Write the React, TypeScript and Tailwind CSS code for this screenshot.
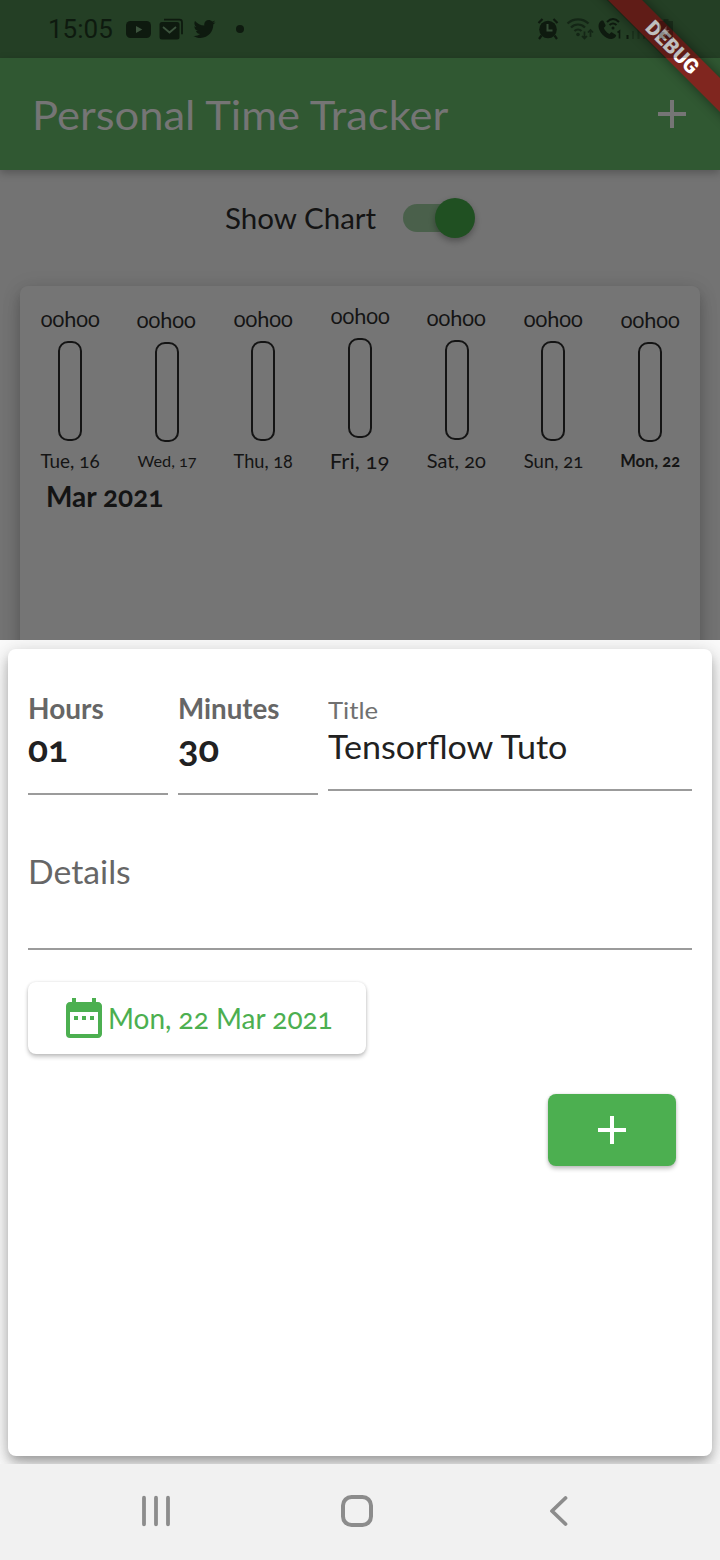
import type { ReactNode } from "react";
import { FaTwitter } from "react-icons/fa";
import { MdAdd, MdDateRange } from "react-icons/md";

type Day = { label: string; lift: string; style: string };

const days: Day[] = [
  { label: "Tue, 16", lift: "pb-[8px]", style: "text-[18.5px] scale-x-102" },
  { label: "Wed, 17", lift: "pb-[7px]", style: "text-[16px] scale-x-102" },
  { label: "Thu, 18", lift: "pb-[8px]", style: "text-[18.5px] scale-x-98" },
  { label: "Fri, 19", lift: "pb-[11px]", style: "text-[22px] scale-x-101" },
  { label: "Sat, 20", lift: "pb-[9px]", style: "text-[18.5px] scale-x-108" },
  { label: "Sun, 21", lift: "pb-[8px]", style: "text-[18.5px]" },
  { label: "Mon, 22", lift: "pb-[7px]", style: "text-[16.5px] font-bold" },
];

function StatusBar() {
  return (
    <div className="flex h-[58px] shrink-0 items-center bg-[#243f25] pl-[48px] text-[#0e1a0f]">
      <span className="w-[78px] font-['Roboto'] text-[26px] leading-[60px] [font-feature-settings:'lnum']">15:05</span>
      <svg className="h-[17px] w-[25px]" viewBox="0 0 25 17">
        <rect width="25" height="17" rx="4.5" fill="currentColor" />
        <path d="M10 5v7l6.3-3.500z" fill="#3c533d" />
      </svg>
      <svg className="ml-[8px] h-[22px] w-[25px]" viewBox="0 0 25 22" fill="none">
        <path d="M5 1.700h15.500a2.500 2.500 0 0 1 2.500 2.500v12" stroke="currentColor" strokeWidth="1.800" />
        <rect x="0.500" y="4" width="20" height="17.500" rx="2.500" fill="currentColor" />
        <path d="M4 9l6.500 5.500L17 9" stroke="#3c533d" strokeWidth="1.800" />
      </svg>
      <FaTwitter className="ml-[9px] h-[22px] w-[23px]" />
      <span className="ml-[20px] h-[8px] w-[8px] rounded-full bg-[#0e1a0f]" />
      <svg className="ml-[292px] h-[24px] w-[140px]" viewBox="0 0 140 24" fill="none" stroke="currentColor">
        <circle cx="12" cy="12.500" r="8.800" fill="currentColor" stroke="none" />
        <path d="M2.500 6l4-4M21.500 6l-4-4M5.500 18.500l-2.500 3.500M18.500 18.500l2.500 3.500" strokeWidth="2.200" />
        <path d="M11.500 7v6.500h5" stroke="#354d36" strokeWidth="2" />
        <g stroke="#142616" strokeWidth="2.200">
          <path d="M31.500 6.500c6-5.500 15-5.500 21 0M35 10.500c4-4 10-4 14 0M38.500 14c2-2 5-2 7 0" />
          <circle cx="42" cy="17.500" r="1.800" fill="#142616" stroke="none" />
          <path d="M48.500 14.500v7m-2.500-2.500l2.500 2.500 2.500-2.500M54.500 20v-7m-2.500 2.500l2.500-2.500 2.500 2.500" strokeWidth="1.700" />
        </g>
        <path
          d="M63.500 5.500c1.500-2 3-2.500 4-1.500l2 4c.3 1-.5 2-1.800 2.800 1.200 3 3.300 5 5.800 6.200 1.400-1.800 2-2 3-1.300l3.500 2.300c.8 1-2 4-4.500 4-7 0-13-7.500-13-13 0-1.300.3-2.500 1-3.500z"
          fill="currentColor"
          stroke="none"
        />
        <path d="M71 5c4-4 8-4 12 0M73.500 8c2.500-2.200 4.500-2.200 7 0" strokeWidth="2" />
        <circle cx="77" cy="11" r="1.500" fill="currentColor" stroke="none" />
        <path d="M81.500 15.500l2-1.500v7.500" strokeWidth="1.600" />
        <path d="M91.500 22v-4" strokeWidth="2" />
        <path d="M97 22v-8M102.500 22V9M108 22V4" stroke="#1c331d" strokeWidth="2" />
      </svg>
    </div>
  );
}

function DebugBanner() {
  return (
    <div className="pointer-events-none absolute top-0 right-0 h-[170px] w-[180px] overflow-hidden">
      <div className="absolute top-[35px] left-[8px] flex h-[24px] w-[248px] rotate-45 items-center justify-center bg-[#80261f] shadow-[0_0_12px_rgba(0,0,0,0.45)]">
        <span className="pl-px font-['Roboto'] text-[20.500px] leading-[24px] font-black text-white">DEBUG</span>
      </div>
      <div className="absolute top-0 left-0 h-[58px] w-[180px] bg-black/25 [clip-path:polygon(67px_0,102px_0,160px_58px,125px_58px)]" />
      <svg className="absolute top-[19px] left-[119px] h-[20px] w-[14px]" viewBox="0 0 14 20">
        <path d="M4.500 0h5v2H14v18H0V2h4.500z" fill="#000" fillOpacity="0.28" />
        <path d="M7.500 7l-5 6h3v5l5-7h-3z" fill="#fff" fillOpacity="0.25" />
      </svg>
    </div>
  );
}

function Field({ children, className }: { children: ReactNode; className: string }) {
  return <div className={`flex flex-col items-start border-b-2 border-[#9b9b9b] whitespace-nowrap ${className}`}>{children}</div>;
}

export default function App() {
  return (
    <div className="relative flex h-[1560px] w-[720px] flex-col overflow-hidden bg-white font-['Lato',sans-serif] [font-feature-settings:'onum','liga']">
      <div className="flex h-[640px] flex-col overflow-hidden bg-[#737373] text-[#141414]">
        <StatusBar />
        <header className="flex h-[112px] shrink-0 items-center justify-between bg-[#305832] pr-[24px] pl-[32px] text-[#757575] shadow-[0_3px_8px_rgba(0,0,0,0.25)]">
          <h1 className="origin-left scale-x-[1.088] pt-[2px] text-[40px] leading-[48px] whitespace-nowrap">Personal Time Tracker</h1>
          <MdAdd className="h-[48px] w-[48px]" />
        </header>

        <div className="flex h-[96px] shrink-0 items-center pl-[224.500px]">
          <div className="w-[178.500px]">
            <span className="inline-block origin-left scale-x-[1.055] text-[28px] leading-[36px] whitespace-nowrap">Show Chart</span>
          </div>
          <div className="flex h-[28px] w-[72px] items-center justify-end rounded-full bg-gradient-to-r from-[#4a604b] from-90% to-transparent to-90%">
            <span className="h-[40px] w-[40px] shrink-0 rounded-full bg-[#205022] shadow-[0_3px_6px_rgba(0,0,0,0.3)]" />
          </div>
        </div>

        <section className="mx-[20px] mt-[20px] h-[500px] shrink-0 rounded-[8px] bg-[#757575] px-[1.500px] shadow-[0_6px_10px_-2px_rgba(0,0,0,0.15),0_10px_20px_rgba(0,0,0,0.12),0_2px_20px_rgba(0,0,0,0.1)]">
          <div className="grid grid-cols-7">
            {days.map((day) => (
              <div key={day.label} className="flex flex-col items-center whitespace-nowrap">
                <div className={`flex h-[163px] flex-col items-center justify-end ${day.lift}`}>
                  <span className="mb-[10px] text-[21.500px] leading-[24px] scale-x-101">00h00</span>
                  <span className="h-[100px] w-[24px] rounded-[10px] border-2 border-[#141414]" />
                </div>
                <span className={`leading-[24px] ${day.style}`}>{day.label}</span>
              </div>
            ))}
          </div>
          <h2 className="mt-[6.500px] pl-[24.500px] text-[28px] leading-[32px] font-bold">Mar 2021</h2>
        </section>
      </div>

      <main className="h-[824px] overflow-hidden bg-[#fafafa] px-[8px] pt-[9px]">
        <div className="h-[807px] rounded-[8px] bg-white px-[20px] pt-[43px] text-[#212121] shadow-[0_6px_10px_-2px_rgba(0,0,0,0.22),0_10px_20px_rgba(0,0,0,0.16),0_2px_20px_rgba(0,0,0,0.12)]">
          <div className="flex items-start gap-[10px]">
            <Field className="h-[102.500px] w-[140px]">
              <span className="text-[28px] leading-[32px] font-bold text-[#666]">Hours</span>
              <span className="mt-[4px] text-[37px] leading-[40px] font-bold">01</span>
            </Field>
            <Field className="h-[102.500px] w-[140px]">
              <span className="origin-left scale-x-[0.99] text-[28px] leading-[32px] font-bold text-[#666]">Minutes</span>
              <span className="mt-[4px] origin-left scale-x-[1.03] text-[37px] leading-[40px] font-bold">30</span>
            </Field>
            <Field className="h-[99px] w-[364px] pt-[4px]">
              <span className="origin-left scale-x-[1.07] text-[24px] leading-[28px] text-[#707070]">Title</span>
              <span className="mt-[3px] origin-left scale-x-[1.065] text-[32px] leading-[40px]">Tensorflow Tuto</span>
            </Field>
          </div>

          <Field className="mt-[13px] h-[142px] pt-[44px]">
            <span className="origin-left scale-x-[1.055] text-[32px] leading-[40px] text-[#666]">Details</span>
          </Field>

          <button className="mt-[32px] flex h-[72px] w-[338px] items-center rounded-[8px] bg-white pl-[32px] text-[#4caf50] shadow-[0_3px_4px_rgba(0,0,0,0.22),0_0_3px_rgba(0,0,0,0.12)]">
            <MdDateRange className="h-[48px] w-[48px]" />
            <span className="text-[28px] leading-[32px] whitespace-nowrap">Mon, 22 Mar 2021</span>
          </button>

          <div className="mt-[40px] flex justify-end pr-[16px]">
            <button className="flex h-[72px] w-[128px] items-center justify-center rounded-[8px] bg-[#4caf50] text-white shadow-[0_3px_4px_rgba(0,0,0,0.22),0_0_3px_rgba(0,0,0,0.12)]">
              <MdAdd className="h-[48px] w-[48px]" />
            </button>
          </div>
        </div>
      </main>

      <nav className="flex h-[96px] items-start bg-[#f1f1f1] pt-[30px] pl-[140px] text-[#8c8c8c]">
        <svg className="h-[34px] w-[32px]" viewBox="0 0 32 34" stroke="currentColor" strokeWidth="3.800" strokeLinecap="round">
          <path d="M4 3.700v26.600M16 3.700v26.600M28 3.700v26.600" />
        </svg>
        <svg className="ml-[168px] h-[34px] w-[34px]" viewBox="0 0 34 34" fill="none" stroke="currentColor" strokeWidth="4">
          <rect x="3" y="3" width="28" height="28" rx="8.500" />
        </svg>
        <svg className="ml-[174px] h-[34px] w-[24px]" viewBox="0 0 24 34" fill="none" stroke="currentColor" strokeWidth="3.800" strokeLinecap="round" strokeLinejoin="round">
          <path d="M17.500 4L4 17l13.500 13" />
        </svg>
      </nav>
      <DebugBanner />
    </div>
  );
}
